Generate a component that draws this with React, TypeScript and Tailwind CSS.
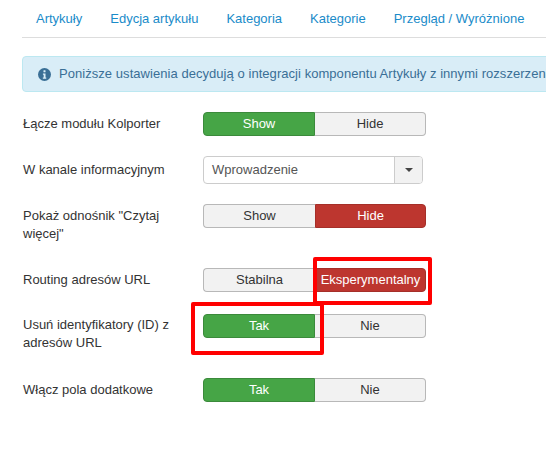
import React from "react";

const tabs = ["Artykuły", "Edycja artykułu", "Kategoria", "Kategorie", "Przegląd / Wyróżnione"];

function InfoIcon() {
  return (
    <svg width="13" height="13" viewBox="0 0 14 14" className="shrink-0">
      <circle cx="7" cy="7" r="7" fill="#3a6f96" />
      <rect x="5.9" y="2.4" width="2.2" height="2.2" rx="0.4" fill="#d9edf7" />
      <path d="M5.3 5.8h2.8v4.4h0.8v1.4H5.2v-1.4h0.9V7.2H5.3z" fill="#d9edf7" />
    </svg>
  );
}

function Toggle({
  left,
  right,
  active,
  color,
}: {
  left: string;
  right: string;
  active: "left" | "right";
  color: "green" | "red";
}) {
  const on =
    color === "green"
      ? "bg-[#46a546] border-[#3b8a3b] text-white"
      : "bg-[#bd362f] border-[#a52f29] text-white";
  const off = "bg-[#f2f2f2] border-[#b8b8b8] text-[#333]";
  return (
    <div className="flex w-[223px] h-6 text-[13px] leading-[22px] text-center">
      <div
        className={`w-[112px] border rounded-l-[4px] ${active === "left" ? on : off + " border-r-0"}`}
      >
        {left}
      </div>
      <div
        className={`flex-1 border rounded-r-[4px] ${active === "right" ? on : off + " border-l-0"}`}
      >
        {right}
      </div>
    </div>
  );
}

function Row({
  label,
  className,
  labelClassName = "pt-[3px]",
  children,
}: {
  label: string;
  className: string;
  labelClassName?: string;
  children: React.ReactNode;
}) {
  return (
    <div className={`flex ${className}`}>
      <div className={`w-[181px] pl-px pr-4 text-[13px] leading-[18px] text-[#333] ${labelClassName}`}>
        {label}
      </div>
      {children}
    </div>
  );
}

export default function App() {
  return (
    <div
      className="relative w-[546px] h-[454px] overflow-hidden bg-white pl-[22px]"
      style={{ fontFamily: '"Liberation Sans", Arial, sans-serif' }}
    >
      <div className="flex h-[38px] border-b border-[#ddd] pl-[14px] gap-[28px] text-[13px] leading-[38px] text-[#1a8bc9] w-[546px]">
        {tabs.map((t) => (
          <span key={t}>{t}</span>
        ))}
      </div>

      <div className="mt-[18px] flex h-[36px] w-[600px] items-center gap-[8px] rounded-[4px] border border-[#bce8f1] bg-[#d9edf7] pl-[15px] text-[13px] tracking-[0.05px] text-[#3a6f96] whitespace-nowrap">
        <InfoIcon />
        <span>Poniższe ustawienia decydują o integracji komponentu Artykuły z innymi rozszerzeniami</span>
      </div>

      <Row label="Łącze modułu Kolporter" className="mt-5">
        <Toggle left="Show" right="Hide" active="left" color="green" />
      </Row>

      <Row label="W kanale informacyjnym" className="mt-5 items-center" labelClassName="pb-[1px]">
        <div className="flex h-7 w-[220px] overflow-hidden rounded-[4px] border border-[#ccc] text-[13px] text-[#555]">
          <div className="flex-1 pl-2 leading-[26px]">Wprowadzenie</div>
          <div className="flex w-7 items-center justify-center border-l border-[#ccc] bg-[#f2f2f2]">
            <div className="h-0 w-0 border-x-[4px] border-t-[4px] border-x-transparent border-t-[#444]" />
          </div>
        </div>
      </Row>

      <Row label={'Pokaż odnośnik "Czytaj więcej"'} className="mt-5 h-[40px]">
        <Toggle left="Show" right="Hide" active="right" color="red" />
      </Row>

      <Row label="Routing adresów URL" className="mt-6">
        <Toggle left="Stabilna" right="Eksperymentalny" active="right" color="red" />
      </Row>

      <Row label="Usuń identyfikatory (ID) z adresów URL" className="mt-[22px] h-[40px]" labelClassName="pt-[2px]">
        <Toggle left="Tak" right="Nie" active="left" color="green" />
      </Row>

      <Row label="Włącz pola dodatkowe" className="mt-6">
        <Toggle left="Tak" right="Nie" active="left" color="green" />
      </Row>

      {/* czerwone ramki naniesione na zrzut */}
      <div className="absolute left-[313px] top-[257px] h-[48px] w-[119px] rounded-[2px] border-[4px] border-[#ff0000]" />
      <div className="absolute left-[191px] top-[302px] h-[53px] w-[133px] rounded-[2px] border-[4px] border-[#ff0000]" />
    </div>
  );
}
